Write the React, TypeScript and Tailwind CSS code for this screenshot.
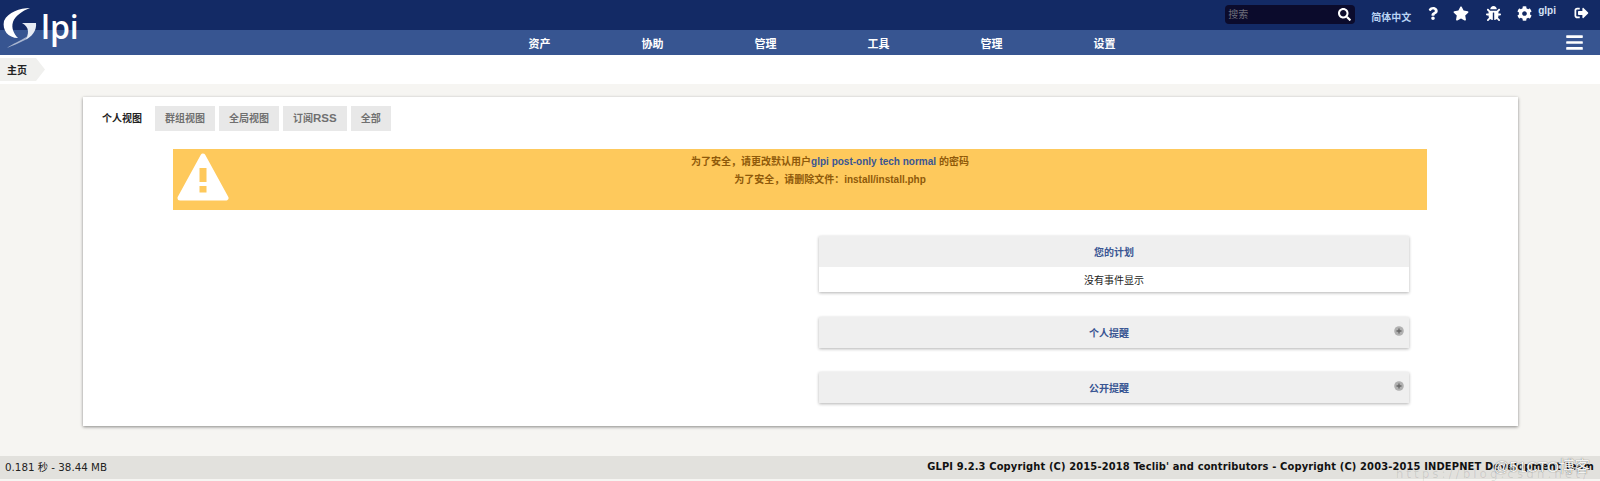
import React from "react";
import { FaBars, FaBug, FaCog, FaQuestion, FaSearch, FaSignOutAlt, FaStar } from "react-icons/fa";

const font = { fontFamily: '"Liberation Sans", "Noto Sans CJK SC", sans-serif' };

const menu = ["资产", "协助", "管理", "工具", "管理", "设置"];
const tabs = ["群组视图", "全局视图", "订阅RSS", "全部"];

const Logo = () => (
  <div className="absolute left-0 top-0 text-white">
    <svg width="40" height="50" viewBox="0 0 40 50" className="block">
      <path d="M30 8 C20 8 8 12 4 21 C2 30 8 38 18 38 C14 34 11 28 13 22 C15 16 22 11 30 8 Z" fill="#fff" />
      <path d="M22 23 L36 23 C37 30 32 37 25 40 C29 35 30 27 22 23 Z" fill="#e6ebf4" />
      <path d="M25 40 C19 43 12 46 7 48 C12 44 20 41 28 36 Z" fill="#a9b6d0" />
    </svg>
    <span
      className="absolute left-[41px] top-[5px] text-[32px] leading-[44px] font-semibold"
      style={{ fontFamily: '"Open Sans", sans-serif' }}
    >
      lpi
    </span>
  </div>
);

const Header = () => (
  <header className="relative">
    <div className="h-[30px] bg-[#132a65] flex items-start justify-end">
      <div className="mt-[5px] w-[130px] h-[19px] bg-[#0b0b2c] rounded-sm flex items-center justify-between pl-[3px] pr-[3px]">
        <span className="text-[10px] text-[#6d6d7a]">搜索</span>
        <FaSearch className="w-[13px] h-[13px] text-white mr-[1px]" />
      </div>
      <span className="ml-[16px] mt-[11px] w-[39px] text-[10px] leading-[14px] font-bold text-[#b9d3f3] whitespace-nowrap">
        简体中文
      </span>
      <FaQuestion className="ml-[18px] mt-[7px] w-[10px] h-[13px] text-white" />
      <FaStar className="ml-[15px] mt-[6px] w-[16px] h-[15px] text-white" />
      <FaBug className="ml-[17px] mt-[6px] w-[15px] h-[15px] text-white" />
      <FaCog className="ml-[16px] mt-[6px] w-[15px] h-[15px] text-white" />
      <span className="ml-[6px] mt-[4px] text-[10px] leading-[14px] font-bold text-[#d6e2f5]">glpi</span>
      <FaSignOutAlt className="ml-[18px] mt-[6px] mr-[11px] w-[15px] h-[14px] text-white" />
    </div>
    <div className="h-[25px] bg-[#375591] flex items-center">
      <nav className="ml-[483px] pt-[3px] flex">
        {menu.map((item, i) => (
          <span key={i} className="w-[113px] text-center text-[11px] font-bold text-white">
            {item}
          </span>
        ))}
      </nav>
      <FaBars className="ml-auto mr-[16px] w-[19px] h-[19px] text-white" />
    </div>
    <Logo />
  </header>
);

const Breadcrumb = () => (
  <div className="h-[29px] bg-white flex items-center">
    <div className="h-[23px] w-[45px] bg-[#f0f0ee] [clip-path:polygon(0_0,36px_0,100%_50%,36px_100%,0_100%)] flex items-center pl-[7px] pt-[2px]">
      <span className="text-[10px] font-bold text-[#222]">主页</span>
    </div>
  </div>
);

const PlusIcon = () => (
  <svg width="10" height="10" viewBox="0 0 10 10" className="absolute right-[5px] top-[9px]">
    <circle cx="5" cy="5" r="4.8" fill="#b0b0b0" />
    <path d="M5 2.5 V7.5 M2.5 5 H7.5" stroke="#666" strokeWidth="1.3" />
  </svg>
);

const Panel = ({ title, plus, children }: { title: string; plus?: boolean; children?: React.ReactNode }) => (
  <div className="w-[590px] shadow-[0_1px_3px_rgba(0,0,0,0.3)]">
    <div
      className={`relative h-[31px] pt-[1px] bg-[#efefef] flex items-center justify-center text-[10px] font-bold text-[#3a5693] ${
        plus ? "pr-[10px]" : ""
      }`}
    >
      {title}
      {plus && <PlusIcon />}
    </div>
    {children}
  </div>
);

const WarningIcon = () => (
  <svg width="52" height="48" viewBox="0 0 52 48" className="absolute left-[4px] top-[4px]">
    <path d="M26 3 L49 45 H3 Z" fill="#fff" stroke="#fff" strokeWidth="5" strokeLinejoin="round" />
    <rect x="22.5" y="15" width="7" height="14" fill="#fec95c" />
    <rect x="22.5" y="33" width="7" height="6.5" fill="#fec95c" />
  </svg>
);

export default function App() {
  return (
    <div className="w-[1600px] h-[481px] bg-[#f6f5f2] overflow-hidden flex flex-col" style={font}>
      <Header />
      <Breadcrumb />
      <main className="h-[372px] pt-[13px] pl-[83px]">
        <div className="w-[1435px] h-[329px] bg-white shadow-[0_1px_3px_rgba(0,0,0,0.45)] pt-[9px]">
          <div className="flex items-center pl-[15px] gap-[4px]">
            <span className="w-[48px] mr-[5px] text-center text-[10px] font-bold text-[#222]">个人视图</span>
            {tabs.map((tab) => (
              <span
                key={tab}
                className="h-[25px] px-[10px] bg-[#e8e8e8] flex items-center text-[10px] font-bold text-[#707070]"
              >
                {tab.endsWith("RSS") ? (
                  <>
                    订阅<span className="text-[11.5px]">RSS</span>
                  </>
                ) : (
                  tab
                )}
              </span>
            ))}
          </div>
          <div className="relative ml-[90px] mt-[18px] w-[1254px] h-[61px] bg-[#fec95c] pl-[60px] pt-[4px] text-center text-[10px] leading-[18px] font-bold text-[#8f5a0a]">
            <WarningIcon />
            <p>
              为了安全，请更改默认用户<span className="text-[#3a5693]">glpi post-only tech normal</span> 的密码
            </p>
            <p>为了安全，请删除文件：install/install.php</p>
          </div>
          <div className="ml-[736px] mt-[26px] flex flex-col">
            <Panel title="您的计划">
              <div className="h-[25px] pt-[1px] bg-white flex items-center justify-center text-[10px] text-[#222]">
                没有事件显示
              </div>
            </Panel>
            <div className="mt-[25px]">
              <Panel title="个人提醒" plus />
            </div>
            <div className="mt-[24px]">
              <Panel title="公开提醒" plus />
            </div>
          </div>
        </div>
      </main>
      <footer
        className="relative h-[23px] bg-[#e2e1dd] flex items-center justify-between pl-[5px] pr-[6px] text-[#222]"
        style={{ fontFamily: '"DejaVu Sans", "Noto Sans CJK SC", sans-serif' }}
      >
        <span className="text-[10.3px]">0.181 秒 - 38.44 MB</span>
        <span
          className="font-bold text-[#111] text-[11px] tracking-[0.15px]"
          style={{ fontFamily: '"DejaVu Sans Condensed", "DejaVu Sans", sans-serif' }}
        >
          GLPI 9.2.3 Copyright (C) 2015-2018 Teclib' and contributors - Copyright (C) 2003-2015 INDEPNET Development Team
        </span>
        <span className="absolute right-[10px] top-[-1px] text-[15.5px] text-[#f4f4f2] [text-shadow:0_0_1px_#555]" style={font}>
          @51CTO博客
        </span>
        <span className="absolute right-[10px] top-[12px] text-[12px] leading-[12px] text-black/10 tracking-[3px]">
          https://blog.csdn.net/
        </span>
      </footer>
    </div>
  );
}
